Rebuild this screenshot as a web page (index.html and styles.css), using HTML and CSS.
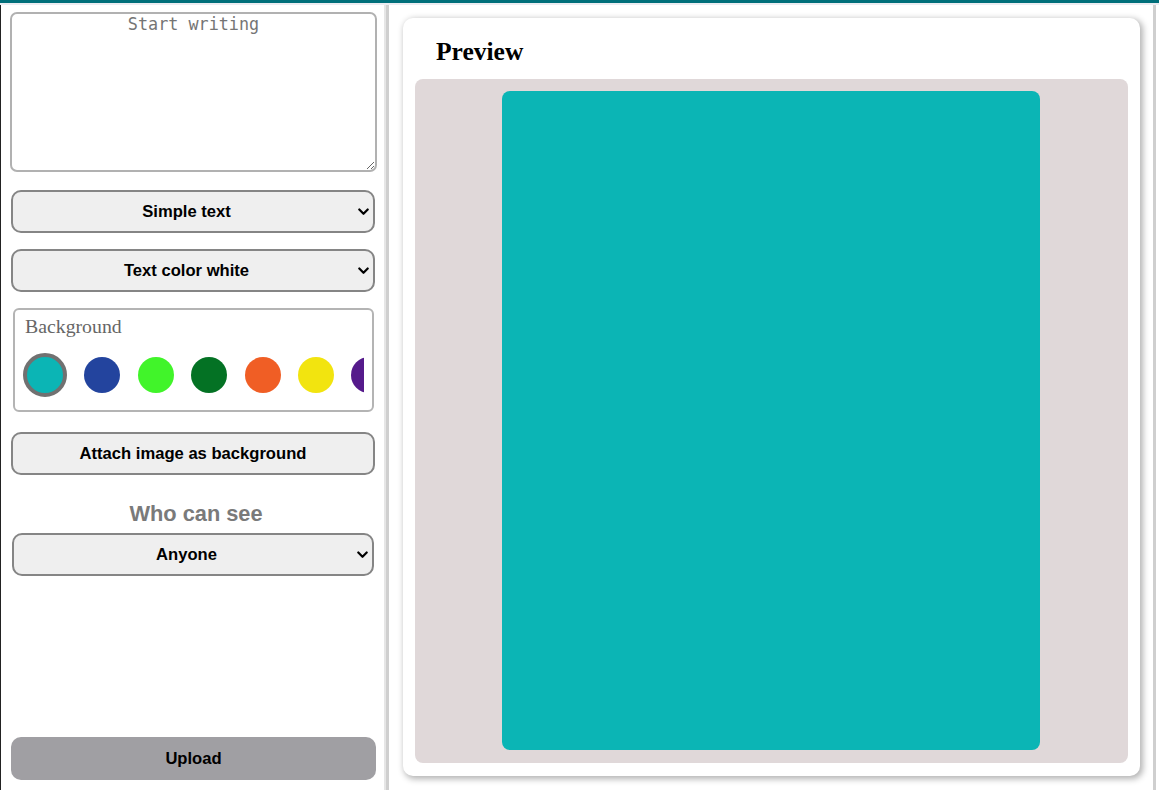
FILE: index.html
```html
<!DOCTYPE html>
<html lang="en">
<head>
<meta charset="utf-8">
<title>Create post</title>
<link rel="stylesheet" href="styles.css">
</head>
<body>
<div class="topbar"></div>
<div class="topline"></div>
<div class="main">
  <aside class="side">
    <textarea class="writer" placeholder="Start writing"></textarea>
    <div class="pick-wrap wrap-type">
      <select class="pick">
        <option>Simple text</option>
      </select>
      <svg class="chev" width="11" height="8" viewBox="0 0 11 8"><path d="M1.3 1.5 L5.5 5.8 L9.7 1.5" fill="none" stroke="#000" stroke-width="2.2" stroke-linecap="round" stroke-linejoin="round"/></svg>
    </div>
    <div class="pick-wrap wrap-color">
      <select class="pick">
        <option>Text color white</option>
      </select>
      <svg class="chev" width="11" height="8" viewBox="0 0 11 8"><path d="M1.3 1.5 L5.5 5.8 L9.7 1.5" fill="none" stroke="#000" stroke-width="2.2" stroke-linecap="round" stroke-linejoin="round"/></svg>
    </div>
    <div class="bgbox">
      <div class="bgbox-label">Background</div>
      <div class="swatches">
        <span class="swatch selected c-teal"></span>
        <span class="swatch c-blue"></span>
        <span class="swatch c-lime"></span>
        <span class="swatch c-green"></span>
        <span class="swatch c-orange"></span>
        <span class="swatch c-yellow"></span>
        <span class="swatch c-purple"></span>
        <span class="swatch c-red"></span>
      </div>
    </div>
    <button class="btn attach">Attach image as background</button>
    <div class="who">Who can see</div>
    <div class="pick-wrap wrap-who">
      <select class="pick">
        <option>Anyone</option>
      </select>
      <svg class="chev" width="11" height="8" viewBox="0 0 11 8"><path d="M1.3 1.5 L5.5 5.8 L9.7 1.5" fill="none" stroke="#000" stroke-width="2.2" stroke-linecap="round" stroke-linejoin="round"/></svg>
    </div>
    <button class="btn upload">Upload</button>
  </aside>
  <section class="stage">
    <div class="panel">
      <h2 class="panel-title">Preview</h2>
      <div class="canvas">
        <div class="card"></div>
      </div>
    </div>
  </section>
</div>
</body>
</html>
```
FILE: styles.css
```css
* { box-sizing: border-box; }
html, body { margin: 0; padding: 0; background: #fff; }
body { width: 1159px; height: 790px; overflow: hidden; font-family: "Liberation Sans", Arial, sans-serif; }

.topbar { height: 3px; background: #006f7a; }
.topline { height: 2px; background: #ececf1; }

.main { display: flex; height: 785px; }

.side {
  width: 386px;
  flex-shrink: 0;
  border-left: 1px solid #222;
  border-right: 2px solid #e6e6e6;
  display: flex;
  flex-direction: column;
  align-items: flex-start;
}

.writer {
  margin: 7px 0 0 9px;
  width: 367px;
  height: 160px;
  border: 2px solid #b1b1b1;
  border-radius: 7px;
  padding: 0 2px;
  font-family: "DejaVu Sans Mono", monospace;
  font-size: 16.8px;
  text-align: center;
  resize: both;
  outline: none;
}
.writer::placeholder { color: #757575; }

.pick-wrap { position: relative; height: 43px; }
.wrap-type { margin: 18px 0 0 10px; width: 364px; }
.wrap-color { margin: 16px 0 0 10px; width: 364px; }
.wrap-who { margin: 7px 0 0 11px; width: 362px; }

.pick {
  display: block;
  width: 100%;
  height: 43px;
  appearance: none;
  -webkit-appearance: none;
  border: 2px solid #858585;
  border-radius: 10px;
  background-color: #efefef;
  color: #000;
  padding: 0 17px 0 4px;
  font-family: "Liberation Sans", Arial, sans-serif;
  font-weight: bold;
  font-size: 16.6px;
  text-align: center;
  text-align-last: center;
}
.chev {
  position: absolute;
  right: 6px;
  top: 18px;
  pointer-events: none;
}

.bgbox {
  margin: 16px 0 0 12px;
  width: 361px;
  height: 104px;
  border: 2px solid #b4b4b4;
  border-radius: 6px;
  padding: 5px 8px 0 8px;
}
.bgbox-label {
  padding-left: 2px;
  font-family: "Liberation Serif", "Times New Roman", serif;
  font-size: 19.8px;
  line-height: 23px;
  color: #666;
}
.swatches {
  margin-top: 15px;
  height: 44px;
  display: flex;
  align-items: center;
  gap: 18px;
  overflow: hidden;
}
.swatch {
  flex-shrink: 0;
  width: 36px;
  height: 36px;
  border-radius: 50%;
}
.swatch.selected { width: 44px; height: 44px; border: 4px solid #717171; margin-right: 0; }
.swatch + .swatch { margin-left: -0.6px; }
.c-teal { background: #0bb5b5; }
.c-blue { background: #23449e; }
.c-lime { background: #41f42a; }
.c-green { background: #047224; }
.c-orange { background: #f05e25; }
.c-yellow { background: #f2e40f; }
.c-purple { background: #551a8b; }
.c-red { background: #c81e3a; }

.btn {
  height: 43px;
  border-radius: 10px;
  font-family: "Liberation Sans", Arial, sans-serif;
  font-weight: bold;
  font-size: 16.6px;
  color: #000;
  padding: 0;
}
.attach {
  margin: 20px 0 0 10px;
  width: 364px;
  background: #efefef;
  border: 2px solid #858585;
}
.who {
  margin-top: 26px;
  align-self: stretch;
  padding-left: 7px;
  text-align: center;
  font-weight: bold;
  font-size: 21.8px;
  line-height: 25px;
  color: #7a7a7a;
}
.upload {
  margin: auto 0 10px 10px;
  width: 365px;
  background: #a09fa3;
  border: none;
}

.stage {
  width: 770px;
  flex-shrink: 0;
  border-left: 3px solid #cfcfcf;
  border-right: 3px solid #cfcfcf;
  padding: 13px 13px 0 14px;
}

.panel {
  height: 758px;
  background: #fff;
  border-radius: 10px;
  box-shadow: 2px 2px 6px 1px rgba(0, 0, 0, 0.3);
  padding: 0 12px 13px 12px;
  display: flex;
  flex-direction: column;
}
.panel-title {
  margin: 0 0 13px 0;
  padding: 20px 0 0 21px;
  font-family: "Liberation Serif", "Times New Roman", serif;
  font-weight: bold;
  font-size: 25.5px;
  line-height: 28px;
  color: #000;
}
.canvas {
  flex: 1;
  background: #e0d8d9;
  border-radius: 8px;
  padding: 12px 1px 13px 0;
  display: flex;
  justify-content: center;
}
.card {
  width: 538px;
  background: #0bb5b5;
  border-radius: 8px;
}
```
